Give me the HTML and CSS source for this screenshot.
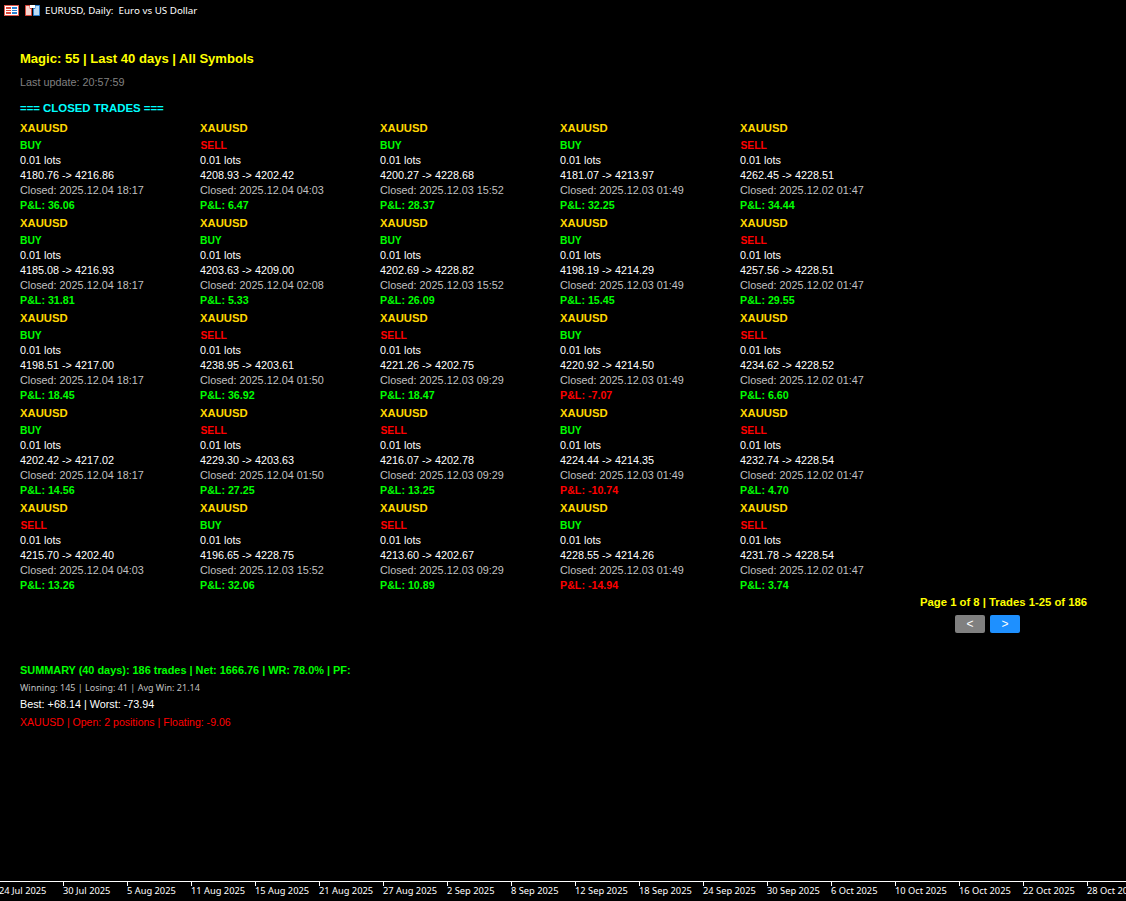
FILE: index.html
```html
<!DOCTYPE html>
<html lang="en">
<head>
<meta charset="utf-8">
<title>EURUSD, Daily</title>
<link rel="stylesheet" href="styles.css">
</head>
<body>
<div class="chart">
  <header class="titlebar">
    <svg class="icon icon-a" width="15" height="11" viewBox="0 0 15 11"><rect x="0.5" y="0.5" width="14" height="10" fill="#fff" stroke="#e0584c"/><rect x="2" y="2" width="5" height="2" fill="#d9483c"/><rect x="8" y="2" width="5" height="2" fill="#2a7fd0"/><rect x="2" y="5" width="5" height="1" fill="#d9483c"/><rect x="8" y="5" width="5" height="1" fill="#2a7fd0"/><rect x="2" y="7" width="5" height="2" fill="#d9483c"/><rect x="8" y="7" width="5" height="2" fill="#2a7fd0"/></svg>
    <svg class="icon icon-b" width="15" height="11" viewBox="0 0 15 11"><path d="M0.5 0.5H5V3.5H6.5V10.5H0.5Z" fill="#f6d6d0" stroke="#d9483c"/><path d="M14.5 0.5H10V3.5H8.5V10.5H14.5Z" fill="#bcdcf4" stroke="#2a7fd0"/><rect x="5" y="0" width="5" height="3" fill="#fff"/></svg>
    <span class="title-text">EURUSD, Daily:&nbsp; Euro vs US Dollar</span>
  </header>
  <main class="panel">
    <h1 class="heading">Magic: 55 | Last 40 days | All Symbols</h1>
    <p class="updated">Last update: 20:57:59</p>
    <h2 class="section">=== CLOSED TRADES ===</h2>
    <section class="trades">
      <article class="trade"><div class="sym">XAUUSD</div><div class="side buy">BUY</div><div class="line">0.01 lots</div><div class="line">4180.76 -&gt; 4216.86</div><div class="line closed">Closed: 2025.12.04 18:17</div><div class="pnl up">P&amp;L: 36.06</div></article>
      <article class="trade"><div class="sym">XAUUSD</div><div class="side sell">SELL</div><div class="line">0.01 lots</div><div class="line">4208.93 -&gt; 4202.42</div><div class="line closed">Closed: 2025.12.04 04:03</div><div class="pnl up">P&amp;L: 6.47</div></article>
      <article class="trade"><div class="sym">XAUUSD</div><div class="side buy">BUY</div><div class="line">0.01 lots</div><div class="line">4200.27 -&gt; 4228.68</div><div class="line closed">Closed: 2025.12.03 15:52</div><div class="pnl up">P&amp;L: 28.37</div></article>
      <article class="trade"><div class="sym">XAUUSD</div><div class="side buy">BUY</div><div class="line">0.01 lots</div><div class="line">4181.07 -&gt; 4213.97</div><div class="line closed">Closed: 2025.12.03 01:49</div><div class="pnl up">P&amp;L: 32.25</div></article>
      <article class="trade"><div class="sym">XAUUSD</div><div class="side sell">SELL</div><div class="line">0.01 lots</div><div class="line">4262.45 -&gt; 4228.51</div><div class="line closed">Closed: 2025.12.02 01:47</div><div class="pnl up">P&amp;L: 34.44</div></article>

      <article class="trade"><div class="sym">XAUUSD</div><div class="side buy">BUY</div><div class="line">0.01 lots</div><div class="line">4185.08 -&gt; 4216.93</div><div class="line closed">Closed: 2025.12.04 18:17</div><div class="pnl up">P&amp;L: 31.81</div></article>
      <article class="trade"><div class="sym">XAUUSD</div><div class="side buy">BUY</div><div class="line">0.01 lots</div><div class="line">4203.63 -&gt; 4209.00</div><div class="line closed">Closed: 2025.12.04 02:08</div><div class="pnl up">P&amp;L: 5.33</div></article>
      <article class="trade"><div class="sym">XAUUSD</div><div class="side buy">BUY</div><div class="line">0.01 lots</div><div class="line">4202.69 -&gt; 4228.82</div><div class="line closed">Closed: 2025.12.03 15:52</div><div class="pnl up">P&amp;L: 26.09</div></article>
      <article class="trade"><div class="sym">XAUUSD</div><div class="side buy">BUY</div><div class="line">0.01 lots</div><div class="line">4198.19 -&gt; 4214.29</div><div class="line closed">Closed: 2025.12.03 01:49</div><div class="pnl up">P&amp;L: 15.45</div></article>
      <article class="trade"><div class="sym">XAUUSD</div><div class="side sell">SELL</div><div class="line">0.01 lots</div><div class="line">4257.56 -&gt; 4228.51</div><div class="line closed">Closed: 2025.12.02 01:47</div><div class="pnl up">P&amp;L: 29.55</div></article>

      <article class="trade"><div class="sym">XAUUSD</div><div class="side buy">BUY</div><div class="line">0.01 lots</div><div class="line">4198.51 -&gt; 4217.00</div><div class="line closed">Closed: 2025.12.04 18:17</div><div class="pnl up">P&amp;L: 18.45</div></article>
      <article class="trade"><div class="sym">XAUUSD</div><div class="side sell">SELL</div><div class="line">0.01 lots</div><div class="line">4238.95 -&gt; 4203.61</div><div class="line closed">Closed: 2025.12.04 01:50</div><div class="pnl up">P&amp;L: 36.92</div></article>
      <article class="trade"><div class="sym">XAUUSD</div><div class="side sell">SELL</div><div class="line">0.01 lots</div><div class="line">4221.26 -&gt; 4202.75</div><div class="line closed">Closed: 2025.12.03 09:29</div><div class="pnl up">P&amp;L: 18.47</div></article>
      <article class="trade"><div class="sym">XAUUSD</div><div class="side buy">BUY</div><div class="line">0.01 lots</div><div class="line">4220.92 -&gt; 4214.50</div><div class="line closed">Closed: 2025.12.03 01:49</div><div class="pnl down">P&amp;L: -7.07</div></article>
      <article class="trade"><div class="sym">XAUUSD</div><div class="side sell">SELL</div><div class="line">0.01 lots</div><div class="line">4234.62 -&gt; 4228.52</div><div class="line closed">Closed: 2025.12.02 01:47</div><div class="pnl up">P&amp;L: 6.60</div></article>

      <article class="trade"><div class="sym">XAUUSD</div><div class="side buy">BUY</div><div class="line">0.01 lots</div><div class="line">4202.42 -&gt; 4217.02</div><div class="line closed">Closed: 2025.12.04 18:17</div><div class="pnl up">P&amp;L: 14.56</div></article>
      <article class="trade"><div class="sym">XAUUSD</div><div class="side sell">SELL</div><div class="line">0.01 lots</div><div class="line">4229.30 -&gt; 4203.63</div><div class="line closed">Closed: 2025.12.04 01:50</div><div class="pnl up">P&amp;L: 27.25</div></article>
      <article class="trade"><div class="sym">XAUUSD</div><div class="side sell">SELL</div><div class="line">0.01 lots</div><div class="line">4216.07 -&gt; 4202.78</div><div class="line closed">Closed: 2025.12.03 09:29</div><div class="pnl up">P&amp;L: 13.25</div></article>
      <article class="trade"><div class="sym">XAUUSD</div><div class="side buy">BUY</div><div class="line">0.01 lots</div><div class="line">4224.44 -&gt; 4214.35</div><div class="line closed">Closed: 2025.12.03 01:49</div><div class="pnl down">P&amp;L: -10.74</div></article>
      <article class="trade"><div class="sym">XAUUSD</div><div class="side sell">SELL</div><div class="line">0.01 lots</div><div class="line">4232.74 -&gt; 4228.54</div><div class="line closed">Closed: 2025.12.02 01:47</div><div class="pnl up">P&amp;L: 4.70</div></article>

      <article class="trade"><div class="sym">XAUUSD</div><div class="side sell">SELL</div><div class="line">0.01 lots</div><div class="line">4215.70 -&gt; 4202.40</div><div class="line closed">Closed: 2025.12.04 04:03</div><div class="pnl up">P&amp;L: 13.26</div></article>
      <article class="trade"><div class="sym">XAUUSD</div><div class="side buy">BUY</div><div class="line">0.01 lots</div><div class="line">4196.65 -&gt; 4228.75</div><div class="line closed">Closed: 2025.12.03 15:52</div><div class="pnl up">P&amp;L: 32.06</div></article>
      <article class="trade"><div class="sym">XAUUSD</div><div class="side sell">SELL</div><div class="line">0.01 lots</div><div class="line">4213.60 -&gt; 4202.67</div><div class="line closed">Closed: 2025.12.03 09:29</div><div class="pnl up">P&amp;L: 10.89</div></article>
      <article class="trade"><div class="sym">XAUUSD</div><div class="side buy">BUY</div><div class="line">0.01 lots</div><div class="line">4228.55 -&gt; 4214.26</div><div class="line closed">Closed: 2025.12.03 01:49</div><div class="pnl down">P&amp;L: -14.94</div></article>
      <article class="trade"><div class="sym">XAUUSD</div><div class="side sell">SELL</div><div class="line">0.01 lots</div><div class="line">4231.78 -&gt; 4228.54</div><div class="line closed">Closed: 2025.12.02 01:47</div><div class="pnl up">P&amp;L: 3.74</div></article>
    </section>
    <nav class="pager">
      <div class="pager-text">Page 1 of 8 | Trades 1-25 of 186</div>
      <div class="pager-buttons">
        <button class="btn btn-prev" type="button">&lt;</button>
        <button class="btn btn-next" type="button">&gt;</button>
      </div>
    </nav>
    <section class="summary">
      <div class="sum-main">SUMMARY (40 days): 186 trades | Net: 1666.76 | WR: 78.0% | PF:</div>
      <div class="sum-stats">Winning: 145 | Losing: 41 | Avg Win: 21.14</div>
      <div class="sum-best">Best: +68.14 | Worst: -73.94</div>
      <div class="sum-open">XAUUSD | Open: 2 positions | Floating: -9.06</div>
    </section>
  </main>
  <footer class="axis">
    <span class="tick">24 Jul 2025</span>
    <span class="tick">30 Jul 2025</span>
    <span class="tick">5 Aug 2025</span>
    <span class="tick">11 Aug 2025</span>
    <span class="tick">15 Aug 2025</span>
    <span class="tick">21 Aug 2025</span>
    <span class="tick">27 Aug 2025</span>
    <span class="tick">2 Sep 2025</span>
    <span class="tick">8 Sep 2025</span>
    <span class="tick">12 Sep 2025</span>
    <span class="tick">18 Sep 2025</span>
    <span class="tick">24 Sep 2025</span>
    <span class="tick">30 Sep 2025</span>
    <span class="tick">6 Oct 2025</span>
    <span class="tick">10 Oct 2025</span>
    <span class="tick">16 Oct 2025</span>
    <span class="tick">22 Oct 2025</span>
    <span class="tick">28 Oct 2025</span>
  </footer>
</div>
</body>
</html>
```
FILE: styles.css
```css
* { box-sizing: border-box; }
html, body { margin: 0; padding: 0; background: #000; }
body { font-family: "Liberation Sans", Arial, sans-serif; color: #fff; overflow: hidden; }
.chart { display: flex; flex-direction: column; width: 1126px; height: 901px; overflow: hidden; }

.titlebar { display: flex; align-items: center; height: 20px; padding-left: 4px; flex: none; }
.icon { flex: none; margin-top: 1px; }
.icon-a { margin-right: 6px; }
.icon-b { margin-right: 5px; }
.title-text { font-family: "Noto Sans", sans-serif; font-size: 9.8px; white-space: nowrap; }

.panel { flex: 1; padding: 31px 0 0 20px; }
.heading { margin: 0; font-size: 13.05px; line-height: 16px; font-weight: 700; color: #ffff00; }
.updated { margin: 8px 0 0; font-size: 10.8px; line-height: 14px; color: #808080; }
.section { margin: 12px 0 0; font-size: 11.4px; line-height: 14px; font-weight: 700; color: #00ffff; }

.trades { display: grid; grid-template-columns: repeat(5, 180px); grid-auto-rows: 95px; margin-top: 6px; }
.trade { display: flex; flex-direction: column; }
.sym { font-size: 11.3px; line-height: 14px; font-weight: 700; color: #ffd700; height: 17px; }
.side { font-size: 10.3px; line-height: 15px; font-weight: 700; height: 15px; }
.buy { color: #00ff00; }
.sell { color: #ff0000; padding-left: 0.5px; }
.line { font-size: 10.8px; line-height: 15px; color: #fff; height: 15px; }
.closed { color: #c0c0c0; }
.pnl { font-size: 10.7px; line-height: 15px; font-weight: 700; height: 15px; }
.up { color: #00ff00; }
.down { color: #ff0000; }

.pager { display: flex; flex-direction: column; margin-top: -1px; height: 54px; padding-left: 900px; }
.pager-text { font-size: 11.3px; line-height: 14px; font-weight: 700; color: #ffff00; white-space: nowrap; }
.pager-buttons { display: flex; gap: 5px; margin-top: 6px; margin-left: 35px; }
.btn { width: 30px; height: 18px; border: 0; border-radius: 2px; padding: 0; color: #fff; font: 12px/18px "Liberation Sans", sans-serif; }
.btn-prev { background: #808080; }
.btn-next { background: #1e90ff; }

.summary { margin-top: 14px; }
.sum-main { font-size: 10.9px; line-height: 14px; font-weight: 700; color: #00ff00; }
.sum-stats { font-family: "Noto Sans", sans-serif; font-size: 9px; line-height: 12px; margin-top: 5px; color: #c0c0c0; }
.sum-best { font-size: 10.8px; line-height: 14px; margin-top: 3px; color: #fff; }
.sum-open { font-size: 10.55px; line-height: 14px; margin-top: 4px; color: #ff0000; }

.axis { display: flex; flex: none; height: 20px; margin-left: -1px; width: 1300px; border-top: 1px solid #fff; overflow: hidden; }
.tick { position: relative; flex: none; width: 64px; font-family: "Noto Sans", sans-serif; font-size: 9.3px; line-height: 16px; padding-top: 1px; white-space: nowrap; color: #fff; }
.tick::before { content: ""; position: absolute; left: 0; top: 0; width: 1px; height: 4px; background: #fff; }
```
